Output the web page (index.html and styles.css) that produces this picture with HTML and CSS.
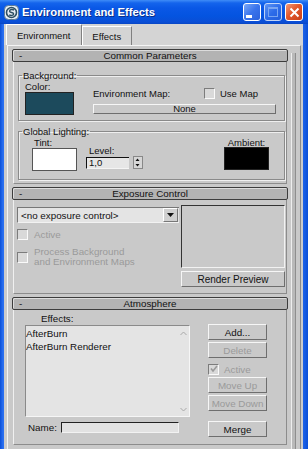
FILE: index.html
```html
<!DOCTYPE html>
<html lang="en">
<head>
  <meta charset="UTF-8">
  <title>Environment and Effects</title>
  <link rel="stylesheet" href="styles.css">
</head>
<body>
  <div class="window">
    <div class="titlebar">
      <span class="app-icon">
        <svg width="15" height="15" viewBox="0 0 15 15">
          <rect x="0.5" y="0.5" width="14" height="14" rx="4" fill="#e8eef4" stroke="#5a7a96"/>
          <circle cx="7.5" cy="7.5" r="5" fill="none" stroke="#2d4f63" stroke-width="1.6"/>
          <path d="M10 5.2 C8.8 4.2 5.6 4.3 5.6 6.2 C5.6 8 9.6 7 9.6 9 C9.6 10.6 6.6 10.8 5.2 9.8" fill="none" stroke="#2d4f63" stroke-width="1.5"/>
        </svg>
      </span>
      <span class="title">Environment and Effects</span>
      <div class="caption-buttons">
        <span class="cap-btn min"><span class="min-bar"></span></span>
        <span class="cap-btn max"><span class="max-box"></span></span>
        <span class="cap-btn close">
          <svg width="11" height="11" viewBox="0 0 11 11">
            <path d="M1.5 1.5 L9.5 9.5 M9.5 1.5 L1.5 9.5" stroke="#fff" stroke-width="2"/>
          </svg>
        </span>
      </div>
    </div>

    <div class="client">
      <div class="tabs">
        <div class="tab active">Environment</div>
        <div class="tab">Effects</div>
      </div>

      <div class="tab-page">
        <div class="rollouts">

          <section class="rollout">
            <div class="rollout-head"><span class="minus">-</span><span class="head-title">Common Parameters</span></div>
            <div class="rollout-body common">
              <fieldset class="group bg-group">
                <legend>Background:</legend>
                <div class="color-col">
                  <div class="lbl">Color:</div>
                  <div class="swatch teal"></div>
                </div>
                <div class="map-col">
                  <div class="map-row">
                    <span>Environment Map:</span>
                    <label class="check-label"><span class="check"></span>Use Map</label>
                  </div>
                  <div class="btn map-btn">None</div>
                </div>
              </fieldset>

              <fieldset class="group light-group">
                <legend>Global Lighting:</legend>
                <div class="tint-col">
                  <div class="lbl">Tint:</div>
                  <div class="swatch white"></div>
                </div>
                <div class="level-col">
                  <div class="lbl">Level:</div>
                  <div class="spinner-row">
                    <div class="spin-input">1,0</div>
                    <div class="spin-arrows">
                      <svg width="7" height="11" viewBox="0 0 7 11">
                        <path d="M3.5 1.5 L5.5 4 L1.5 4 Z M1.5 7 L5.5 7 L3.5 9.5 Z" fill="#111"/>
                      </svg>
                    </div>
                  </div>
                </div>
                <div class="ambient-col">
                  <div class="lbl center">Ambient:</div>
                  <div class="swatch black"></div>
                </div>
              </fieldset>
            </div>
          </section>

          <section class="rollout">
            <div class="rollout-head"><span class="minus">-</span><span class="head-title">Exposure Control</span></div>
            <div class="rollout-body exposure">
              <div class="exp-left">
                <div class="dropdown">
                  <span class="dd-text">&lt;no exposure control&gt;</span>
                  <span class="dd-arrow">
                    <svg width="7" height="4" viewBox="0 0 7 4"><path d="M0 0 L7 0 L3.5 4 Z" fill="#111"/></svg>
                  </span>
                </div>
                <label class="check-label disabled row-active"><span class="check"></span>Active</label>
                <label class="check-label disabled row-process"><span class="check"></span><span>Process Background<br>and Environment Maps</span></label>
              </div>
              <div class="exp-right">
                <div class="preview"></div>
                <div class="btn render-btn">Render Preview</div>
              </div>
            </div>
          </section>

          <section class="rollout last">
            <div class="rollout-head"><span class="minus">-</span><span class="head-title">Atmosphere</span></div>
            <div class="rollout-body atmos">
              <div class="atmos-left">
                <div class="lbl effects-lbl">Effects:</div>
                <div class="listbox">
                  <div class="list-items">
                    <div>AfterBurn</div>
                    <div>AfterBurn Renderer</div>
                  </div>
                  <div class="list-scroll">
                    <svg width="7" height="5" viewBox="0 0 7 5"><path d="M0.5 4 L3.5 1 L6.5 4" fill="none" stroke="#a8a8a8"/></svg>
                    <svg width="7" height="5" viewBox="0 0 7 5"><path d="M0.5 1 L3.5 4 L6.5 1" fill="none" stroke="#a8a8a8"/></svg>
                  </div>
                </div>
                <div class="name-row">
                  <span>Name:</span>
                  <div class="name-input"></div>
                </div>
              </div>
              <div class="atmos-right">
                <div class="btn side-btn">Add...</div>
                <div class="btn side-btn disabled">Delete</div>
                <label class="check-label disabled side-check"><span class="check checked">
                  <svg width="8" height="8" viewBox="0 0 8 8"><path d="M1 3.5 L3 6 L7 1" fill="none" stroke="#9a9a9a" stroke-width="1.6"/></svg>
                </span>Active</label>
                <div class="btn side-btn disabled">Move Up</div>
                <div class="btn side-btn disabled">Move Down</div>
                <div class="btn side-btn merge">Merge</div>
              </div>
            </div>
          </section>

        </div>
        <div class="rollout-scroll"></div>
      </div>
    </div>
  </div>
</body>
</html>
```

FILE: styles.css
```css
body {
  margin: 0;
  font-family: "Liberation Sans", Arial, sans-serif;
  font-size: 9.5px;
  color: #111;
  background: #0054e3;
}
.window {
  width: 308px;
  height: 449px;
  display: flex;
  flex-direction: column;
  overflow: hidden;
  background: linear-gradient(90deg, #0a4fd8 0, #2a6ff0 3px, #2a6ff0 300px, #0a4fd8 308px);
}
.titlebar {
  height: 24px;
  flex: none;
  display: flex;
  align-items: center;
  padding: 0 5px 0 4px;
  background: linear-gradient(#3f8cf7 0, #1464ec 3px, #0a58e6 8px, #0454e0 16px, #0a4ed6 22px, #0846c4 24px);
  color: #fff;
}
.app-icon {
  width: 15px;
  height: 15px;
  margin-right: 3px;
  display: flex;
}
.title {
  font-weight: bold;
  font-size: 11.3px;
  text-shadow: 1px 1px 0 #0a2f8a;
}
.caption-buttons {
  margin-left: auto;
  display: flex;
  gap: 3px;
}
.cap-btn {
  width: 16px;
  height: 16px;
  border: 1px solid #fff;
  border-radius: 3px;
  display: flex;
  align-items: center;
  justify-content: center;
}
.min, .max {
  background: linear-gradient(135deg, #7aa8f8 0, #3a74ec 50%, #2c62dc 100%);
}
.max {
  opacity: 0.75;
}
.min-bar {
  width: 6px;
  height: 3px;
  background: #fff;
  margin: 8px 6px 0 0;
}
.max-box {
  width: 8px;
  height: 7px;
  border: 1px solid #9fc0f8;
  border-top-width: 2px;
}
.close {
  background: linear-gradient(135deg, #f29a7a 0, #e2582c 45%, #c8401a 100%);
}

.client {
  flex: 1;
  margin: 0 5px 0 4px;
  background: #cbcbcb;
  display: flex;
  flex-direction: column;
}
.tabs {
  height: 21px;
  display: flex;
  align-items: flex-end;
  padding-left: 2px;
  background: #d4d4d4;
}
.tab {
  height: 18px;
  padding: 0 10px 0 9px;
  display: flex;
  align-items: center;
  border-top: 1px solid #fff;
  border-left: 1px solid #fff;
  border-right: 1px solid #808080;
  font-size: 9.5px;
  background: #d4d4d4;
}
.tab.active {
  height: 20px;
  padding: 0 11px 0 10px;
  background: #d0d0d0;
}
.tab-page {
  flex: 1;
  margin: 0 2px 0 3px;
  border-top: 1px solid #f4f4f4;
  border-left: 1px solid #f4f4f4;
  border-right: 1px solid #8a8a8a;
  padding: 3px 4px 0 4px;
  display: flex;
  gap: 3px;
  background: #c9c9c9;
}
.rollouts {
  width: 276px;
  display: flex;
  flex-direction: column;
  gap: 3px;
}
.rollout-scroll {
  width: 3px;
  margin-top: 4px;
  border-left: 1px solid #eee;
  border-right: 1px solid #8e8e8e;
  background: #b9b9b9;
}
.rollout-head {
  height: 11px;
  border: 1px solid #3c3c3c;
  border-radius: 2px;
  background: #b3b3b3;
  box-shadow: inset 1px 1px 0 #dcdcdc;
  display: flex;
  align-items: center;
  font-size: 9.8px;
}
.minus {
  width: 14px;
  padding-left: 6px;
}
.head-title {
  flex: 1;
  text-align: center;
  padding-right: 20px;
}
.rollout-body {
  border-left: 1px solid #f0f0f0;
  border-right: 1px solid #8c8c8c;
  border-bottom: 1px solid #8c8c8c;
  margin: 0 1px;
}
.lbl {
  line-height: 11px;
}
.center {
  text-align: center;
}

.common {
  padding: 8px 1px 3px 4px;
}
.group {
  margin: 0;
  padding: 0 8px 5px 2px;
  border: 1px solid #8a8a8a;
  box-shadow: 1px 1px 0 #efefef, inset 1px 1px 0 #efefef;
  display: flex;
}
.group legend {
  padding: 0 1px;
  margin-left: 1px;
  line-height: 11px;
}
.color-col {
  width: 49px;
  margin-left: 4px;
}
.swatch {
  height: 21px;
  border: 1px solid #222;
}
.teal {
  background: #1c4a5c;
}
.white {
  background: #fff;
  border-color: #555;
}
.black {
  background: #000;
}
.map-col {
  flex: 1;
  margin-left: 19px;
  padding-top: 7px;
}
.map-row {
  display: flex;
  justify-content: space-between;
  line-height: 11px;
  padding-right: 18px;
}
.check-label {
  display: flex;
  align-items: center;
  gap: 5px;
}
.check {
  width: 9px;
  height: 9px;
  border-top: 1px solid #7c7c7c;
  border-left: 1px solid #7c7c7c;
  border-right: 1px solid #fafafa;
  border-bottom: 1px solid #fafafa;
  background: #d9d9d9;
  display: flex;
  align-items: center;
  justify-content: center;
}
.btn {
  display: flex;
  align-items: center;
  justify-content: center;
  background: #c9c9c9;
  border-top: 1px solid #f6f6f6;
  border-left: 1px solid #f6f6f6;
  border-right: 1px solid #6e6e6e;
  border-bottom: 1px solid #6e6e6e;
}
.map-btn {
  height: 8px;
  margin-top: 5px;
  line-height: 8px;
}

.light-group {
  margin-top: 5px;
  padding: 0 15px 8px 2px;
  align-items: flex-end;
}
.tint-col {
  width: 45px;
  margin-left: 11px;
}
.tint-col .lbl {
  padding-left: 2px;
}
.level-col {
  margin-left: 9px;
  margin-bottom: 2px;
}
.level-col .lbl {
  padding-left: 3px;
}
.spinner-row {
  display: flex;
  align-items: center;
  gap: 4px;
}
.spin-input {
  width: 40px;
  height: 10px;
  line-height: 10px;
  padding-left: 2px;
  border-top: 1px solid #111;
  border-left: 1px solid #111;
  border-bottom: 1px solid #f4f4f4;
  background: #e6e6e6;
}
.spin-arrows {
  width: 8px;
  height: 11px;
  border: 1px solid #888;
  background: #d6d6d6;
  display: flex;
}
.ambient-col {
  margin-left: auto;
  width: 45px;
  margin-bottom: 1px;
}
.ambient-col .lbl {
  margin-bottom: -1px;
}

.exposure {
  height: 93px;
  padding: 0 1px 0 3px;
  display: flex;
  justify-content: space-between;
}
.exp-left {
  width: 162px;
  padding-top: 7px;
}
.dropdown {
  height: 14px;
  border-top: 1px solid #777;
  border-left: 1px solid #777;
  border-bottom: 1px solid #f2f2f2;
  background: #e4e4e4;
  display: flex;
  align-items: center;
  font-size: 9.8px;
}
.dd-text {
  flex: 1;
  padding-left: 3px;
}
.dd-arrow {
  width: 13px;
  height: 12px;
  margin-right: 1px;
  background: #d0d0d0;
  border-top: 1px solid #fff;
  border-left: 1px solid #fff;
  border-right: 1px solid #777;
  border-bottom: 1px solid #777;
  display: flex;
  align-items: center;
  justify-content: center;
}
.disabled {
  color: #9a9a9a;
}
.row-active {
  margin-top: 6px;
  gap: 6px;
  font-size: 9.8px;
}
.row-process {
  margin-top: 7px;
  gap: 6px;
  font-size: 9.8px;
  line-height: 10px;
}
.exp-right {
  width: 104px;
  padding-top: 5px;
}
.preview {
  height: 61px;
  border-top: 1px solid #333;
  border-left: 1px solid #333;
  border-right: 1px solid #f2f2f2;
  border-bottom: 1px solid #f2f2f2;
  background: #c9c9c9;
}
.render-btn {
  height: 14px;
  margin-top: 3px;
  font-size: 10px;
}

.atmos {
  margin-bottom: 4px;
  display: flex;
  padding: 3px 0 5px 11px;
}
.atmos-left {
  width: 165px;
}
.effects-lbl {
  margin-left: 16px;
  font-size: 9.8px;
}
.listbox {
  height: 90px;
  margin-top: 1px;
  border-top: 1px solid #8a8a8a;
  border-left: 1px solid #8a8a8a;
  border-right: 1px solid #f6f6f6;
  border-bottom: 1px solid #f6f6f6;
  background: #e4e4e4;
  display: flex;
}
.list-items {
  flex: 1;
  padding-top: 1px;
  font-size: 9.8px;
  line-height: 13px;
}
.list-scroll {
  width: 12px;
  display: flex;
  flex-direction: column;
  justify-content: space-between;
  align-items: center;
  padding: 5px 0 4px;
}
.name-row {
  display: flex;
  align-items: center;
  gap: 4px;
  margin-top: 5px;
  padding-left: 3px;
  font-size: 9.8px;
}
.name-input {
  width: 116px;
  height: 9px;
  border-top: 1px solid #222;
  border-left: 1px solid #222;
  border-bottom: 1px solid #f2f2f2;
  border-right: 1px solid #f2f2f2;
  background: #e2e2e2;
}
.atmos-right {
  width: 59px;
  margin-left: 18px;
  padding-top: 11px;
  display: flex;
  flex-direction: column;
}
.side-btn {
  height: 14px;
  margin-bottom: 2px;
  font-size: 9.8px;
}
.side-check {
  height: 12px;
  margin: 3px 0 2px;
  gap: 5px;
  font-size: 9.8px;
}
.merge {
  margin-top: 8px;
}
```
